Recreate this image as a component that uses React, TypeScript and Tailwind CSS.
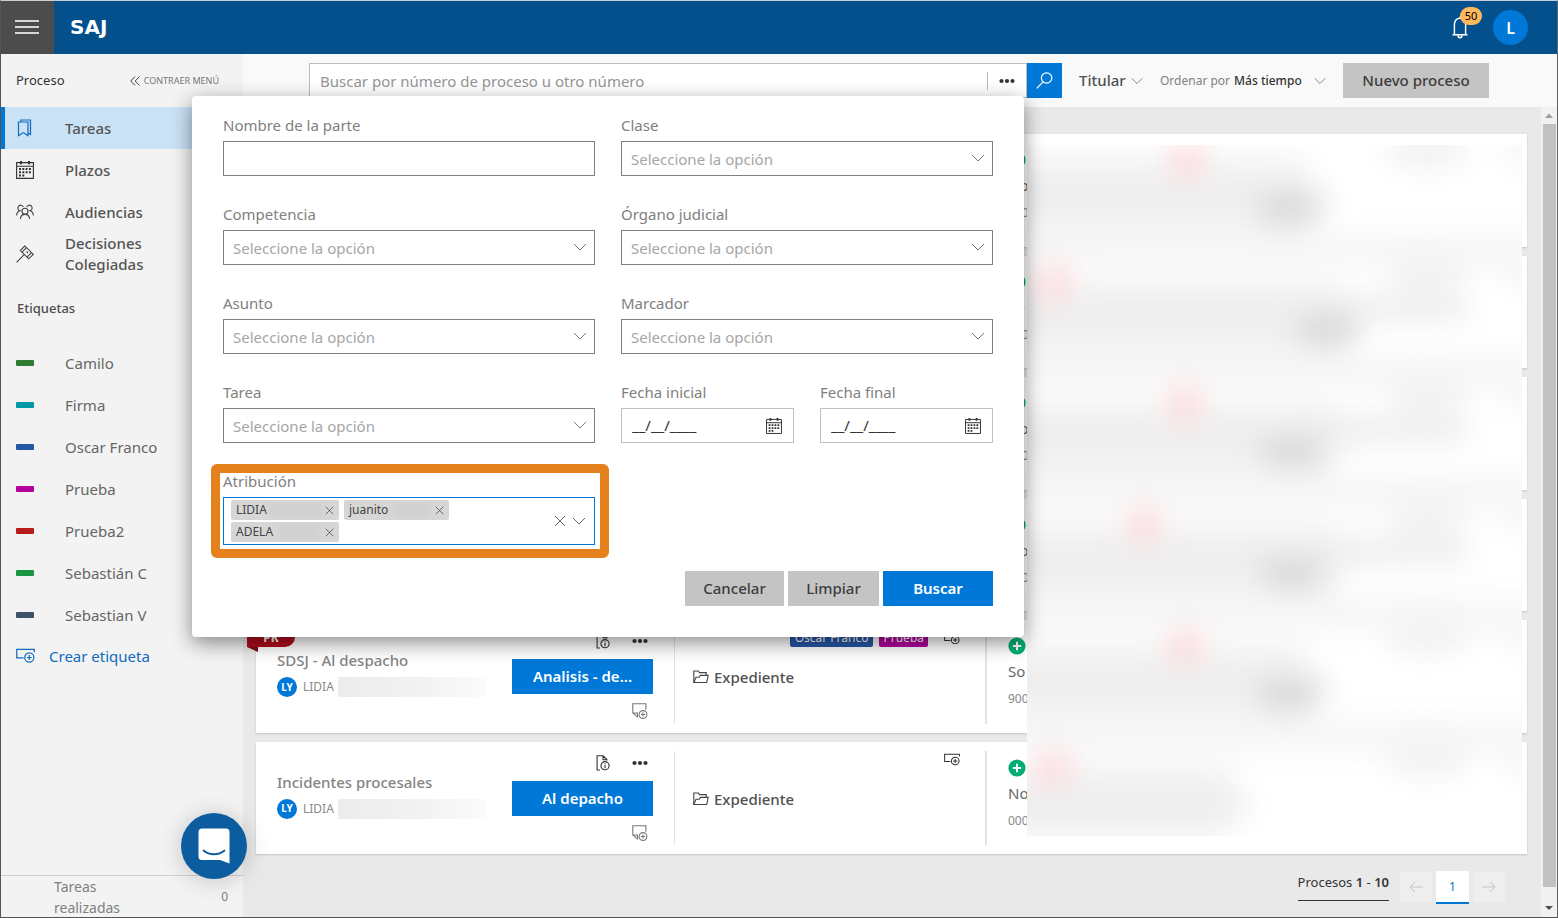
import type { ReactNode } from "react";

type IconProps = { className?: string };

const ChevronDown = ({ className = "" }: IconProps) => (
  <svg className={className} width="14" height="8" viewBox="0 0 14 8" fill="none" stroke="currentColor" strokeWidth="1">
    <path d="M1 1l6 6 6-6" />
  </svg>
);

const Cross = ({ size }: { size: number }) => (
  <svg width={size} height={size} viewBox="0 0 12 12" fill="none" stroke="currentColor" strokeWidth="1">
    <path d="M1 1l10 10M11 1L1 11" />
  </svg>
);

const Dots = () => (
  <svg width="16" height="6" viewBox="0 0 16 6" fill="#333">
    <circle cx="2.5" cy="3" r="2.1" />
    <circle cx="8" cy="3" r="2.1" />
    <circle cx="13.5" cy="3" r="2.1" />
  </svg>
);

const BookmarkIcon = () => (
  <svg width="18" height="18" viewBox="0 0 18 18" fill="none" stroke="#0f6cbd" strokeWidth="1.2">
    <path d="M2.5 3h9.500v13.600l-4.700-3-4.800 3z" />
    <path d="M5 3V1h9.500v14.400L12 14" />
  </svg>
);

const CalendarIcon = () => (
  <svg className="h-full w-full" viewBox="0 0 18 18" fill="none" stroke="#333" strokeWidth="1.1">
    <path d="M.6 1.600h16.800v15.800H.6zM.6 5.300h16.800" />
    <path d="M5 0v3.200M13 0v3.200" strokeWidth="2" />
    <path d="M3 8.100h12M3 11.300h12M3 14.500h5.300" strokeWidth="2" strokeDasharray="2 1.300" />
  </svg>
);

const PeopleIcon = () => (
  <svg width="18" height="16" viewBox="0 0 18 16" fill="none" stroke="#444" strokeWidth="1.1">
    <circle cx="9" cy="7.2" r="3" />
    <path d="M4.4 15c.2-2.8 2-4.6 4.6-4.6s4.400 1.800 4.600 4.600" />
    <path d="M7.300 3A2.800 2.800 0 1 0 4 6.700C2 7.300.700 9 .600 11.400M10.700 3A2.800 2.800 0 1 1 14 6.700c2 .6 3.300 2.300 3.400 4.700" />
  </svg>
);

const GavelIcon = () => (
  <svg width="18" height="18" viewBox="0 0 18 18" fill="none" stroke="#444" strokeWidth="1.1">
    <path d="M8.700 1l1.800 1.600 5 5L17.300 9.400l-4.600 4.400-1.600-1.700-5.200-5L4.300 5.500z" />
    <path d="M10.500 2.600L6 7.100M15.500 7.600l-4.400 4.500M10.500 6.500l1.500 1.500M8.300 9.400L.6 17.300" />
  </svg>
);

const TagPlusIcon = ({ width, color }: { width: number; color: string }) => (
  <svg width={width} height={width * 0.8} viewBox="0 0 20 16" fill="none" stroke={color} strokeWidth="1.3">
    <path d="M8 10.500H.8V1.500h18.400v3" />
    <circle cx="14" cy="10" r="4.800" />
    <path d="M14 7.400v5.200M11.400 10h5.200" />
  </svg>
);

const DocInfoIcon = () => (
  <svg width="14" height="16" viewBox="0 0 14 16" fill="none" stroke="#333" strokeWidth="1.1">
    <path d="M4 15H1.100V.8h6l3.800 3.700v1M7 .8v3.900h4" />
    <circle cx="9" cy="10.700" r="4.100" />
    <path d="M9 8.200v1M9 10v3.200" />
  </svg>
);

const NotePlusIcon = () => (
  <svg width="16" height="16" viewBox="0 0 16 16" fill="none" stroke="#777" strokeWidth="1.1">
    <path d="M6 14.300L.800 10V.700h13.100v6M.800 10h4.700v4.200" />
    <circle cx="11" cy="11.500" r="3.900" />
    <path d="M11 9.400v4.200M8.900 11.500h4.200" />
  </svg>
);

const FolderIcon = () => (
  <svg width="16" height="14" viewBox="0 0 16 14" fill="none" stroke="#444" strokeWidth="1.1">
    <path d="M.8 12.500V1h4.400l1.300 1.600h6.700v2.700" />
    <path d="M.8 12.500L3 7.200h3.200l1.300-1.800h7.700l-1.500 7.100z" />
  </svg>
);

const PlusBadge = () => (
  <svg width="18" height="18" viewBox="0 0 18 18">
    <circle cx="9" cy="9" r="8.600" fill="#00ad75" />
    <path d="M9 4.800v8.400M4.800 9h8.400" stroke="#fff" strokeWidth="2" />
  </svg>
);

const Arrow = ({ flip = false }: { flip?: boolean }) => (
  <svg className={flip ? "rotate-180" : ""} width="14" height="12" viewBox="0 0 14 12" fill="none" stroke="#c4c4c4" strokeWidth="1">
    <path d="M14 6H1M6 1L1 6l5 5" />
  </svg>
);

const mainLinks: { label: string; icon: ReactNode; active?: boolean }[] = [
  { label: "Tareas", icon: <BookmarkIcon />, active: true },
  { label: "Plazos", icon: <span className="h-[18px] w-[18px]"><CalendarIcon /></span> },
  { label: "Audiencias", icon: <PeopleIcon /> },
  { label: "Decisiones Colegiadas", icon: <GavelIcon /> },
];

const tags = [
  { name: "Camilo", color: "bg-[#2e7d32]" },
  { name: "Firma", color: "bg-[#0097a7]" },
  { name: "Oscar Franco", color: "bg-[#2557a7]" },
  { name: "Prueba", color: "bg-[#b4009e]" },
  { name: "Prueba2", color: "bg-[#b71c1c]" },
  { name: "Sebastián C", color: "bg-[#1a9641]" },
  { name: "Sebastian V", color: "bg-[#3b5368]" },
];

function Sidebar() {
  return (
    <aside className="flex w-[242px] shrink-0 flex-col bg-[#f3f3f3]">
      <div className="flex h-[53px] items-center justify-between pr-6 pl-[15px]">
        <span className="text-[13px] text-[#333]">Proceso</span>
        <button className="flex items-center gap-1 text-[9px] text-[#777]">
          <svg width="10" height="10" viewBox="0 0 10 10" fill="none" stroke="#444" strokeWidth="1">
            <path d="M5 .5L.7 5 5 9.500M9.500.5L5.200 5l4.300 4.500" />
          </svg>
          CONTRAER MENÚ
        </button>
      </div>
      <nav>
        {mainLinks.map((l) => (
          <a
            key={l.label}
            href="#"
            className={`flex h-[42px] items-center border-l-4 pl-[11px] text-[15px] leading-[21px] font-medium text-[#555] ${
              l.active ? "border-[#0078d7] bg-[#cae2f6]" : "border-transparent"
            }`}
          >
            <span className="flex w-[49px] items-center">{l.icon}</span>
            <span className="w-[120px]">{l.label}</span>
          </a>
        ))}
      </nav>
      <h2 className="mt-[23px] pl-4 text-[13px] leading-5 font-medium text-[#4c4c4c]">Etiquetas</h2>
      <ul className="mt-6">
        {tags.map((t) => (
          <li key={t.name}>
            <a href="#" className="flex h-[42px] items-center pl-[15px] text-[15px] text-[#666]">
              <span className={`mr-[31px] h-[6px] w-[18px] rounded-[1px] ${t.color}`} />
              {t.name}
            </a>
          </li>
        ))}
      </ul>
      <button className="flex h-10 items-center gap-[14px] pl-[15px] text-[15px] text-[#0f6cbd]">
        <TagPlusIcon width={19} color="#0f6cbd" />
        Crear etiqueta
      </button>
      <div className="mt-auto flex h-[42px] items-start justify-between border-t border-[#d0d0d0] pr-[15px] pl-[53px] text-[14px] text-[#808080]">
        <span className="w-[80px] leading-[21px]">Tareas realizadas</span>
        <span className="self-center text-[12px]">0</span>
      </div>
    </aside>
  );
}

function SelectField({ id, label }: { id: string; label: string }) {
  return (
    <div className="flex flex-col gap-[6px]">
      <label htmlFor={id} className="text-[15px] leading-5 text-[#808080]">{label}</label>
      <div className="relative">
        <select id={id} className="block h-[35px] w-full appearance-none rounded-none border border-[#808080] bg-white px-[9px] pt-[2px] text-[15px] text-[#a6a6a6]">
          <option>Seleccione la opción</option>
        </select>
        <ChevronDown className="pointer-events-none absolute top-[13px] right-2 text-[#777]" />
      </div>
    </div>
  );
}

function DateField({ id, label }: { id: string; label: string }) {
  return (
    <div className="flex min-w-0 flex-1 flex-col gap-[6px]">
      <label htmlFor={id} className="text-[15px] leading-5 text-[#808080]">{label}</label>
      <div className="flex h-[35px] items-center border border-[#c0c0c0] pr-[11px] pl-[10px]">
        <input id={id} defaultValue="__/__/____" className="min-w-0 flex-1 bg-transparent text-[15px] text-[#333] outline-none" />
        <button aria-label={`Calendario: ${label}`} className="h-4 w-4"><CalendarIcon /></button>
      </div>
    </div>
  );
}

function Chip({ name, width, blur }: { name: string; width: string; blur: string }) {
  return (
    <span className={`flex h-5 items-center justify-between rounded-[2px] bg-[#d6d6d6] px-[5px] text-[12px] text-[#444] ${width}`}>
      {name}
      <span className={`h-[15px] rounded bg-[#d1d1d1] blur-[1px] ${blur}`} />
      <button aria-label={`Quitar ${name}`}><Cross size={9} /></button>
    </span>
  );
}

function SearchPanel() {
  return (
    <div className="absolute top-[33px] right-[38px] -left-[117px] z-20 rounded-[4px] bg-white px-[31px] pt-[19px] pb-[31px] shadow-[0_6px_20px_rgba(0,0,0,0.45)]">
      <div className="grid grid-cols-2 gap-x-[26px] gap-y-7">
        <div className="flex flex-col gap-[6px]">
          <label htmlFor="parte" className="text-[15px] leading-5 text-[#808080]">Nombre de la parte</label>
          <input id="parte" className="h-[35px] border border-[#808080] px-[9px] text-[15px]" />
        </div>
        <SelectField id="clase" label="Clase" />
        <SelectField id="competencia" label="Competencia" />
        <SelectField id="organo" label="Órgano judicial" />
        <SelectField id="asunto" label="Asunto" />
        <SelectField id="marcador" label="Marcador" />
        <SelectField id="tarea" label="Tarea" />
        <div className="flex gap-[26px]">
          <DateField id="inicial" label="Fecha inicial" />
          <DateField id="final" label="Fecha final" />
        </div>
        <div className="relative flex flex-col gap-[6px]">
          <div className="pointer-events-none absolute -top-[7px] -right-[14px] -bottom-[13px] -left-3 rounded-[6px] border-9 border-[#e5811c]" />
          <span id="atribucion" className="text-[15px] leading-5 text-[#808080]">Atribución</span>
          <div role="group" aria-labelledby="atribucion" className="flex h-12 items-center border border-[#0078d7] pr-2 pl-[7px]">
            <div className="flex flex-1 flex-wrap gap-x-[5px] gap-y-[2px]">
              <Chip name="LIDIA" width="w-[108px]" blur="w-[52px]" />
              <Chip name="juanito" width="w-[105px]" blur="w-[34px]" />
              <Chip name="ADELA" width="w-[108px]" blur="w-[40px]" />
            </div>
            <div className="flex items-center gap-[6px] text-[#666]">
              <button aria-label="Borrar todo"><Cross size={12} /></button>
              <button aria-label="Abrir lista"><ChevronDown /></button>
            </div>
          </div>
        </div>
      </div>
      <div className="mt-[26px] flex justify-end gap-1 text-[15px] font-medium text-[#3c3c3c]">
        <button className="h-[35px] w-[99px] bg-[#c4c4c4]">Cancelar</button>
        <button className="h-[35px] w-[91px] bg-[#c4c4c4]">Limpiar</button>
        <button className="h-[35px] w-[110px] bg-[#0078d7] font-semibold text-white">Buscar</button>
      </div>
    </div>
  );
}

function Toolbar() {
  return (
    <div className="flex h-[53px] items-center bg-[#f9f9f9] pr-[68px] pl-[66px]">
      <form className="relative flex h-[35px] flex-1">
        <div className="flex min-w-0 flex-1 items-center border border-[#bdbdbd] bg-white pl-[10px]">
          <input
            aria-label="Buscar"
            placeholder="Buscar por número de proceso u otro número"
            className="min-w-0 flex-1 pt-[2px] text-[15px] outline-none placeholder:text-[#959595]"
          />
          <button type="button" aria-label="Más filtros" className="flex h-[18px] w-[39px] items-center justify-center border-l border-[#bbb]">
            <Dots />
          </button>
        </div>
        <button type="button" aria-label="Buscar procesos" className="flex w-[35px] items-center justify-center bg-[#0078d7]">
          <svg width="17" height="17" viewBox="0 0 17 17" fill="none" stroke="#fff" strokeWidth="1.200">
            <circle cx="10.600" cy="6" r="5.200" />
            <path d="M7 9.800L.8 16.300" />
          </svg>
        </button>
        <SearchPanel />
      </form>
      <div className="relative ml-[17px] flex w-16 items-center">
        <select aria-label="Rol" className="w-full appearance-none text-[15px] font-medium text-[#505050]">
          <option>Titular</option>
        </select>
        <ChevronDown className="pointer-events-none absolute right-0 w-3 text-[#777]" />
      </div>
      <div className="relative ml-[17px] flex w-[166px] items-center text-[12px]">
        <label htmlFor="orden" className="mr-1 whitespace-nowrap text-[#808080]">Ordenar por</label>
        <select id="orden" className="min-w-0 flex-1 appearance-none font-medium text-[#333]">
          <option>Más tiempo</option>
        </select>
        <ChevronDown className="pointer-events-none absolute right-0 w-3 text-[#777]" />
      </div>
      <button className="ml-[17px] h-[35px] w-[146px] bg-[#c4c4c4] text-[15px] font-medium text-[#3c3c3c]">Nuevo proceso</button>
    </div>
  );
}

type Row = { title?: string; action?: string; ribbon?: boolean; labels?: boolean; party: string; number: string };

const rows: Row[] = [
  { party: "No", number: "000" },
  { party: "Se", number: "000" },
  { party: "No", number: "000" },
  { party: "No", number: "000" },
  { title: "SDSJ - Al despacho", action: "Analisis - de...", ribbon: true, labels: true, party: "So", number: "900" },
  { title: "Incidentes procesales", action: "Al depacho", party: "No", number: "000" },
];

function ProcessCard({ row }: { row: Row }) {
  return (
    <article className="relative grid grid-cols-[419px_312px_1fr] bg-white py-[9px] shadow-[0_1px_2px_rgba(0,0,0,0.16)]">
      {row.ribbon && (
        <div className="absolute top-2 -left-[9px] h-6 w-12">
          <div className="flex h-[19px] items-center justify-center rounded-br-[10px] bg-[#b00d1c] text-[12px] font-bold text-white">PR</div>
          <svg className="block" width="11" height="5" viewBox="0 0 11 5"><path d="M0 0h11v5z" fill="#7d0a14" /></svg>
        </div>
      )}
      <div className="flex justify-between border-r border-[#e3e3e3] pr-[21px] pl-[21px]">
        {row.title && (
          <>
            <div className="flex flex-col gap-[7px] pt-[21px]">
              <h3 className="text-[15px] leading-5 font-medium text-[#848484]">{row.title}</h3>
              <div className="flex items-center">
                <span className="flex h-5 w-5 items-center justify-center rounded-full bg-[#0078d7] text-[10px] font-bold text-white">LY</span>
                <span className="ml-[6px] text-[12px] text-[#888]">LIDIA</span>
                <span className="ml-1 h-5 w-[148px] bg-linear-to-r from-[#ececec] via-[#f1f1f1] to-[#fbfbfb]" />
              </div>
            </div>
            <div className="flex w-[141px] flex-col items-end pt-1">
              <div className="flex h-4 items-center gap-[22px] pr-[5px]">
                <DocInfoIcon />
                <Dots />
              </div>
              <button className="mt-[10px] h-[35px] w-full bg-[#0078d7] text-[15px] font-semibold text-white">{row.action}</button>
              <button aria-label="Agregar nota" className="mt-[9px] mr-[5px]"><NotePlusIcon /></button>
            </div>
          </>
        )}
      </div>
      <div className="relative flex items-center border-r-2 border-[#e3e3e3] pl-[18px]">
        {row.title && (
          <>
            <div className="absolute top-0 right-[25px] flex h-[18px] items-center gap-[6px] text-[12px] leading-[18px] text-white">
              {row.labels && (
                <>
                  <span className="rounded-[2px] bg-[#2557a7] px-[5px]">Oscar Franco</span>
                  <span className="mr-[10px] rounded-[2px] bg-[#b4009e] px-1">Prueba</span>
                </>
              )}
              <TagPlusIcon width={16} color="#333" />
            </div>
            <a href="#" className="flex items-center gap-[5px] pt-[2px] text-[15px] font-medium text-[#505050]">
              <FolderIcon />
              Expediente
            </a>
          </>
        )}
      </div>
      <div className="pt-2 pl-[21px]">
        <PlusBadge />
        <p className="mt-[6px] text-[15px] leading-5 text-[#666]">{row.party}</p>
        <p className="mt-2 text-[12px] leading-5 text-[#888]">{row.number}</p>
      </div>
    </article>
  );
}

const smudges = [
  { pink: 160, band: 290, dark: 262, tail: 0 },
  { pink: 27, band: 320, dark: 300, tail: 440 },
  { pink: 158, band: 320, dark: 265, tail: 440 },
  { pink: 117, band: 320, dark: 265, tail: 440 },
  { pink: 158, band: 290, dark: 262, tail: 0 },
  { pink: 27, band: 215, dark: 0, tail: 0 },
];

function RedactedArea() {
  return (
    <svg
      className="absolute top-[11px] right-[5px] bottom-[18px] left-[771px] h-[calc(100%-29px)] w-[calc(100%-776px)]"
      viewBox="0 0 495 691"
      preserveAspectRatio="none"
      aria-hidden="true"
    >
      <defs>
        <filter id="soft" x="-100%" y="-100%" width="300%" height="300%"><feGaussianBlur stdDeviation="14" /></filter>
      </defs>
      <rect width="495" height="691" fill="#fff" />
      {smudges.map((s, i) => {
        const y = i * 121.5;
        return (
          <g key={i} filter="url(#soft)">
            {i < 5 && <rect x="-60" y={y + 88} width="620" height="34" fill="#f6f6f6" />}
            <rect x="-60" y={y + 12} width={s.band + 50} height="74" fill="#f2f2f2" />
            <rect x="-60" y={y + 44} width={s.band + 70} height="14" fill="#e9e9e9" />
            {s.tail > 0 && <rect x="290" y={y + 28} width={s.tail - 290} height="26" fill="#eeeeee" />}
            {s.dark > 0 && <ellipse cx={s.dark} cy={y + 64} rx="34" ry="18" fill="#dadada" />}
            <ellipse cx={s.pink} cy={y + 16} rx="19" ry="20" fill="#fddcde" />
            <ellipse cx="400" cy={y + 6} rx="42" ry="18" fill="#f2f2f2" />
            <rect x="478" y={y - 6} width="60" height="26" fill="#f5f5f5" />
          </g>
        );
      })}
    </svg>
  );
}

function Pagination() {
  return (
    <div className="mt-[17px] flex items-start justify-end pr-[22px]">
      <p className="mr-[11px] h-[30px] border-b border-[#333] text-[13px] leading-[23px] text-[#333]">
        Procesos <b className="font-semibold">1</b> - <b className="font-semibold">10</b>
      </p>
      <button aria-label="Anterior" className="mt-px flex h-[30px] w-8 items-center justify-center bg-[#eeeeee]"><Arrow /></button>
      <button className="mx-1 h-[33px] w-[33px] border-b-2 border-[#0078d7] bg-white text-[12px] text-[#0078d7]">1</button>
      <button aria-label="Siguiente" className="mt-px flex h-[30px] w-8 items-center justify-center bg-[#eeeeee]"><Arrow flip /></button>
    </div>
  );
}

function Header() {
  return (
    <header className="flex h-[53px] items-center bg-[#04508c] pr-[29px]">
      <button aria-label="Menú" className="flex h-full w-[53px] flex-col items-center justify-center gap-1 bg-[#4c4c4c] pr-[2px] pb-[2px]">
        <span className="h-[2px] w-6 bg-[#d6d6d6]" />
        <span className="h-[2px] w-6 bg-[#d6d6d6]" />
        <span className="h-[2px] w-6 bg-[#d6d6d6]" />
      </button>
      <span className="ml-4 pb-[2px] font-['DejaVu_Sans',sans-serif] text-[20px] font-bold text-white">SAJ</span>
      <button aria-label="Notificaciones" className="relative mr-[25px] ml-auto">
        <svg width="16" height="23" viewBox="0 0 16 23" fill="none" stroke="#fff" strokeWidth="1.400">
          <path d="M.5 18.800h15M2.400 18.500V8.500C2.400 4.800 4.700 2.300 8 2.300s5.600 2.500 5.600 6.200v10M8 2.300V.5" />
          <path d="M6 19.200c0 3.300 4 3.300 4 0" />
        </svg>
        <span className="absolute -top-[9px] left-2 flex h-[18px] w-[22px] items-center justify-center rounded-full bg-[#ffb85f] text-[11px] text-black">50</span>
      </button>
      <button className="h-[35px] w-[35px] rounded-full bg-[#0078d7] text-[16px] font-semibold text-white">L</button>
    </header>
  );
}

export default function App() {
  return (
    <div className="flex min-h-screen flex-col border border-t-[#c3cfd4] border-r-[#666] border-b-[#555] border-l-[#555] font-['Noto_Sans',sans-serif]">
      <Header />
      <div className="flex flex-1">
        <Sidebar />
        <main className="flex min-w-0 flex-1 flex-col bg-[#e9e9e9]">
          <Toolbar />
          <div className="flex flex-1">
            <div className="min-w-0 flex-1 pt-[27px] pr-[14px] pl-[13px]">
              <div className="relative">
                <div className="grid min-h-[720px] auto-rows-fr gap-[9px]">
                  {rows.map((r, i) => <ProcessCard key={i} row={r} />)}
                </div>
                <RedactedArea />
              </div>
              <Pagination />
            </div>
            <div className="flex w-4 flex-col items-center bg-[#f1f1f1]" aria-hidden="true">
              <svg width="8" height="17" viewBox="0 0 8 17"><path d="M4 6.500L8 11H0z" fill="#a0a0a0" /></svg>
              <div className="w-[13px] flex-1 bg-[#c1c1c1]" />
              <svg width="8" height="30" viewBox="0 0 8 30"><path d="M4 23L8 19H0z" fill="#505050" /></svg>
            </div>
          </div>
        </main>
      </div>
      <button
        aria-label="Abrir chat"
        className="fixed bottom-[39px] left-[181px] z-30 flex h-[66px] w-[66px] items-center justify-center rounded-full bg-[#0c5ca0] shadow-[0_2px_24px_rgba(0,0,0,0.2)]"
      >
        <svg width="32" height="36" viewBox="0 0 32 36">
          <path d="M4 .5h24a3.500 3.500 0 0 1 3.500 3.500v31.500L22 32H4a3.500 3.500 0 0 1-3.500-3.500V4A3.500 3.500 0 0 1 4 .5z" fill="#fff" />
          <path d="M5.500 22.500c6 5 15 5 21 0" fill="none" stroke="#0c5ca0" strokeWidth="1.800" strokeLinecap="round" />
        </svg>
      </button>
    </div>
  );
}
